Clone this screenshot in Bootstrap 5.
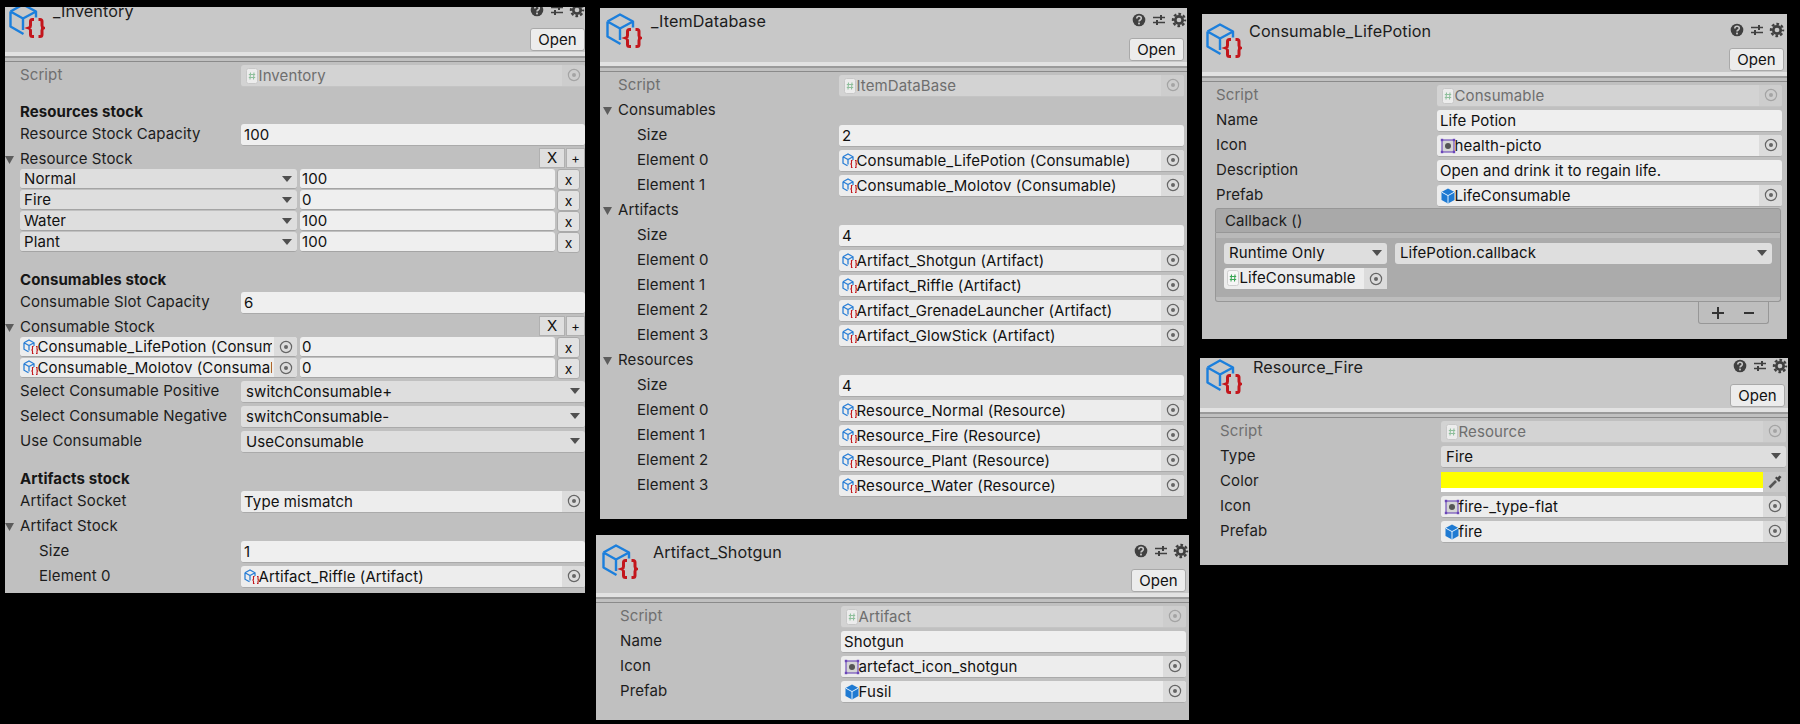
<!DOCTYPE html>
<html lang="en">
<head>
<meta charset="utf-8">
<title>Unity inspectors</title>
<link rel="stylesheet" href="https://cdn.jsdelivr.net/npm/bootstrap@5.3.0/dist/css/bootstrap.min.css">
<style>
html,body{height:100%;}
body{background:#000;font-family:"Inter","Liberation Sans",sans-serif;font-size:15px;letter-spacing:.1px;color:#101010;overflow:hidden;}
.desk{position:relative;width:1800px;height:724px;}
.insp{position:absolute;overflow:hidden;background:#c0c0c0;}
.w1{left:5px;top:7px;width:580px;height:586px;--lx:15px;--fx:236px;--fr:0px;--clip:-13px;}
.w2{left:600px;top:8px;width:587px;height:511px;--lx:18px;--fx:239px;--fr:3px;--clip:-4px;}
.w3{left:596px;top:535px;width:593px;height:185px;--lx:24px;--fx:245px;--fr:3px;--clip:0px;}
.w4{left:1202px;top:14px;width:585px;height:325px;--lx:14px;--fx:235px;--fr:5px;--clip:0px;}
.w5{left:1200px;top:358px;width:588px;height:207px;--lx:20px;--fx:241px;--fr:2px;--clip:-8px;}
.ihead{height:58px;margin-top:var(--clip);background:#c8c8c8;position:relative;}
.ilogo{position:absolute;left:4px;top:9px;width:36px;height:35px;}
.w2 .ilogo,.w3 .ilogo,.w5 .ilogo{left:6px;}
.ititle{position:absolute;left:47px;top:7px;line-height:20px;font-size:16.2px;color:#1c1c1c;}
.w1 .ititle{left:48px;}.w2 .ititle{left:51px;}.w3 .ititle{left:57px;}.w5 .ititle{left:53px;}
.itools{position:absolute;right:0;top:8px;gap:4px;}
.w4 .itools{right:2px;}
.ico-tool{width:16px;height:16px;display:block;}
.btn.open-btn{position:absolute;right:3px;bottom:1px;width:55px;height:23px;padding:0;font-size:15px;line-height:21px;color:#111;background:#ececec;border:1px solid #a9a9a9;border-radius:3px;--bs-btn-hover-bg:#ececec;}
.w1 .btn.open-btn{right:0;}
.isep{height:11px;background:linear-gradient(#e2e2e2 0 4px,#9a9a9a 4px 6px,#c0c0c0 6px 9px,#8a8a8a 9px 10px,#c0c0c0 10px);}
.rw{height:25px;padding-left:var(--lx);padding-right:var(--fr);position:relative;}
.lb{width:calc(var(--fx) - var(--lx));flex:none;white-space:nowrap;color:#1c1c1c;}
.lb.sub{padding-left:19px;}
.lb.dim{color:#6f6f6f;}
.fold{position:absolute;left:calc(var(--lx) - 15px);top:9px;width:9px;height:8px;}
.fld{flex:1 1 auto;min-width:0;height:22px;border-radius:3px;background:#efefef;border-bottom:1px solid #aaa;padding-left:3px;white-space:nowrap;overflow:hidden;position:relative;line-height:21px;color:#111;}
.fld.obj{background:#ededed;padding-right:24px;}
.fld.dis{background:#d3d3d3;color:#6e6e6e;border-bottom-color:#c4c4c4;}
.fld.drop{background:#dedede;padding-left:5px;padding-right:20px;}
.fld.swatch{height:20px;background:linear-gradient(#ff0 0 16px,#fff 16px);border:0;border-radius:0;padding:0;}
.pick{position:absolute;right:0;top:0;bottom:0;width:23px;background:#dcdcdc;display:flex;align-items:center;justify-content:center;}
.dis .pick{background:#cdcdcd;}
.ipick{width:14px;height:14px;}
.ismall{width:16px;height:16px;flex:none;margin-right:-1.5px;vertical-align:-3px;}
.caret{position:absolute;right:5px;top:7px;width:10px;height:6px;}
.drops{width:23px;flex:none;height:20px;background:#c9c9c9;display:flex;align-items:center;justify-content:center;}
.bold{font-weight:700;height:21px;line-height:21px;padding-left:var(--lx);font-size:15px;color:#161616;}
.m-a{margin-top:13px;}.m-b{margin-top:16px;}.m-c{margin-top:14px;}
.listrow{height:21px;padding-left:15px;position:relative;gap:3px;}
.lst{margin-top:-3px;}
.lcell{height:20px;border-radius:3px;border-bottom:1px solid #a4a4a4;position:relative;white-space:nowrap;overflow:hidden;line-height:19px;color:#111;}
.lleft{width:277px;flex:none;background:#dedede;padding-left:4px;}
.lleft.oo{background:#ededed;padding-left:3px;}
.lright{width:255px;flex:none;background:#efefef;padding-left:2px;}
.lcut{display:block;overflow:hidden;width:249px;height:19px;}
.btn.xbtn{width:23px;height:21px;padding:0;margin-left:-1px;font-size:14px;line-height:17px;color:#111;border:1px solid #aaa;background:#e2e2e2;border-radius:3px;--bs-btn-hover-bg:#e2e2e2;}
.listhead{position:absolute;right:0;top:1px;}
.btn.lx{width:26px;height:20px;padding:0;font-size:15px;line-height:18px;color:#111;background:#dfdfdf;border:1px solid #b0b0b0;border-radius:0;margin-right:1px;}
.btn.lp{width:19px;height:20px;padding:0;font-size:13px;line-height:18px;color:#111;background:#dfdfdf;border:1px solid #b0b0b0;border-radius:0;}
.evt{margin:0 6px 0 13px;position:relative;}
.evt-h{height:25px;background:#a9a9a9;border:1px solid #979797;border-radius:3px 3px 0 0;padding-left:9px;line-height:23px;color:#1c1c1c;}
.evt-b{height:69px;background:linear-gradient(#b9b9b9 0 5px,#ababab 5px 64px,#bdbdbd 64px);border:1px solid #979797;border-top:0;border-radius:0 0 3px 3px;padding:10px 8px 0;}
.evt-row{gap:8px;}
.evt-row>.fld{height:21px;line-height:20px;border-bottom:0;}
.w-a{flex:0 0 163px;}
.evt-obj{width:163px;height:21px;margin-top:4px;background:#ededed;border-radius:3px;padding-left:1px;line-height:20px;white-space:nowrap;position:relative;color:#111;}
.pm{position:absolute;right:18px;top:288px;width:71px;height:22px;border:1px solid #979797;border-top:0;border-radius:0 0 3px 3px;background:#bebebe;}
.pmi{width:12px;height:12px;}
.pm-gap{gap:19px;}
</style>
</head>
<body>
<svg width="0" height="0" class="position-absolute">
<defs>
<symbol id="logo" viewBox="0 0 36 35">
<path d="M1.500 8.500 14 1.500l13 7v6M1.500 8.500V23.500L14.500 31M1.500 8.500 14 15.500l13-7M14 15.500V27" fill="none" stroke="#1c7fdc" stroke-width="2.400" stroke-linejoin="round"/>
<path d="M25 16.500h-1.500q-2 0-2 2v4q0 2-1.500 2.500 1.500.5 1.500 2.500v4q0 2 2 2H25M29.500 16.500H31q2 0 2 2v4q0 2 1.500 2.500-1.500.5-1.500 2.500v4q0 2-2 2h-1.500" fill="none" stroke="#c3161c" stroke-width="3"/>
</symbol>
<symbol id="mini" viewBox="0 0 16 16">
<path d="M1 3.800 6 1l5 2.800V7M1 3.800v6.400l4.500 2.600M1 3.800l5 2.800 5-2.800M6 6.600v5" fill="none" stroke="#2a7fd6" stroke-width="1.300"/>
<path d="M10.500 7.500h-1v2.800l-.7.700.7.700v2.800h1M13 7.500h1v2.800l.7.700-.7.700v2.800h-1" fill="none" stroke="#c3161c" stroke-width="1.100"/>
</symbol>
<symbol id="hash" viewBox="0 0 16 16">
<rect x="2.500" y=".5" width="11" height="15" rx="2" fill="#f6f6f6" stroke="#cfcfcf"/>
<path d="M6.500 4.500 6 11.500M10 4.500l-.5 7M4.800 6.500h6.400M4.800 9.500h6.400" stroke="#3aa655" stroke-width="1.100" fill="none"/>
</symbol>
<symbol id="hashd" viewBox="0 0 16 16">
<rect x="2.500" y=".5" width="11" height="15" rx="2" fill="#ececec" stroke="#c8c8c8"/>
<path d="M6.500 4.500 6 11.500M10 4.500l-.5 7M4.800 6.500h6.400M4.800 9.500h6.400" stroke="#8fbf9c" stroke-width="1.100" fill="none"/>
</symbol>
<symbol id="sprite" viewBox="0 0 16 16">
<rect x="2" y="2" width="12" height="12" fill="#d6d6d6" stroke="#6a45b8" stroke-width="1.100"/>
<rect x=".8" y=".8" width="2.400" height="2.400" fill="#6a45b8"/><rect x="12.800" y=".8" width="2.400" height="2.400" fill="#6a45b8"/>
<rect x=".8" y="12.800" width="2.400" height="2.400" fill="#6a45b8"/><rect x="12.800" y="12.800" width="2.400" height="2.400" fill="#6a45b8"/>
<circle cx="8" cy="8" r="3" fill="#555"/>
</symbol>
<symbol id="prefab" viewBox="0 0 16 16">
<path d="M8 .5 14.500 4v8L8 15.500 1.500 12V4z" fill="#1f7ad2"/>
<path d="M1.800 4.200 8 7.600l6.200-3.400M8 7.600v7.600" stroke="#dff0ff" stroke-width="1" fill="none"/>
</symbol>
<symbol id="target" viewBox="0 0 14 14">
<circle cx="7" cy="7" r="5.600" fill="none" stroke="#666" stroke-width="1.200"/><circle cx="7" cy="7" r="2" fill="#666"/>
</symbol>
<symbol id="targetd" viewBox="0 0 14 14">
<circle cx="7" cy="7" r="5.600" fill="none" stroke="#a4a4a4" stroke-width="1.200"/><circle cx="7" cy="7" r="2" fill="#a4a4a4"/>
</symbol>
<symbol id="tri" viewBox="0 0 9 8"><path d="M0 0h9L4.500 8z" fill="#5c5c5c"/></symbol>
<symbol id="car" viewBox="0 0 10 6"><path d="M0 0h10L5 6z" fill="#4f4f4f"/></symbol>
<symbol id="help" viewBox="0 0 16 16">
<circle cx="8" cy="8" r="6.300" fill="#404040"/>
<path d="M5.800 6.400C5.800 5 6.800 4.300 8 4.300s2.300.8 2.300 2c0 1.700-2.300 1.700-2.300 3.300" fill="none" stroke="#c8c8c8" stroke-width="1.600"/>
<rect x="7.100" y="10.600" width="1.800" height="1.800" fill="#c8c8c8"/>
</symbol>
<symbol id="sliders" viewBox="0 0 16 16">
<path d="M2 5.500h12M2 10.500h12" stroke="#404040" stroke-width="1.500"/>
<path d="M10 3v5M6 8v5" stroke="#404040" stroke-width="2"/>
</symbol>
<symbol id="gear" viewBox="0 0 16 16">
<circle cx="8" cy="8" r="3.700" fill="none" stroke="#404040" stroke-width="2.700"/>
<circle cx="8" cy="8" r="6" fill="none" stroke="#404040" stroke-width="2.400" stroke-dasharray="2.650 2.060" stroke-dashoffset="1.320"/>
</symbol>
<symbol id="dropper" viewBox="0 0 16 16">
<path d="M2.500 13.500 9 7" stroke="#555" stroke-width="2.600"/>
<path d="M8 4l4 4 1.500-1.500-1-1 2-2.500-2-1.500-2 2-1-1z" fill="#444"/>
</symbol>
</defs>
</svg>

<main class="desk">

<section class="insp w1">
<div class="ihead">
<svg class="ilogo"><use href="#logo"/></svg>
<div class="ititle">_Inventory</div>
<div class="itools d-flex"><svg class="ico-tool"><use href="#help"/></svg><svg class="ico-tool"><use href="#sliders"/></svg><svg class="ico-tool"><use href="#gear"/></svg></div>
<button class="btn open-btn">Open</button>
</div>
<div class="isep"></div>
<div>
<div class="rw d-flex align-items-center"><div class="lb dim">Script</div><div class="fld obj dis"><svg class="ismall"><use href="#hashd"/></svg>Inventory<span class="pick"><svg class="ipick"><use href="#targetd"/></svg></span></div></div>
<div class="bold m-a">Resources stock</div>
<div class="rw d-flex align-items-center"><div class="lb">Resource Stock Capacity</div><div class="fld">100</div></div>
<div class="rw d-flex align-items-center"><svg class="fold"><use href="#tri"/></svg><div class="lb">Resource Stock</div><div class="listhead d-flex"><button class="btn lx">X</button><button class="btn lp">+</button></div></div>
<div class="lst">
<div class="listrow d-flex"><div class="lcell lleft">Normal<svg class="caret"><use href="#car"/></svg></div><div class="lcell lright">100</div><button class="btn xbtn">x</button></div>
<div class="listrow d-flex"><div class="lcell lleft">Fire<svg class="caret"><use href="#car"/></svg></div><div class="lcell lright">0</div><button class="btn xbtn">x</button></div>
<div class="listrow d-flex"><div class="lcell lleft">Water<svg class="caret"><use href="#car"/></svg></div><div class="lcell lright">100</div><button class="btn xbtn">x</button></div>
<div class="listrow d-flex"><div class="lcell lleft">Plant<svg class="caret"><use href="#car"/></svg></div><div class="lcell lright">100</div><button class="btn xbtn">x</button></div>
</div>
<div class="bold m-b">Consumables stock</div>
<div class="rw d-flex align-items-center"><div class="lb">Consumable Slot Capacity</div><div class="fld">6</div></div>
<div class="rw d-flex align-items-center"><svg class="fold"><use href="#tri"/></svg><div class="lb">Consumable Stock</div><div class="listhead d-flex"><button class="btn lx">X</button><button class="btn lp">+</button></div></div>
<div class="lst">
<div class="listrow d-flex"><div class="lcell lleft oo"><span class="lcut"><svg class="ismall"><use href="#mini"/></svg>Consumable_LifePotion (Consumable)</span><span class="pick"><svg class="ipick"><use href="#target"/></svg></span></div><div class="lcell lright">0</div><button class="btn xbtn">x</button></div>
<div class="listrow d-flex"><div class="lcell lleft oo"><span class="lcut"><svg class="ismall"><use href="#mini"/></svg>Consumable_Molotov (Consumable)</span><span class="pick"><svg class="ipick"><use href="#target"/></svg></span></div><div class="lcell lright">0</div><button class="btn xbtn">x</button></div>
</div>
<div class="rw d-flex align-items-center"><div class="lb">Select Consumable Positive</div><div class="fld drop">switchConsumable+<svg class="caret"><use href="#car"/></svg></div></div>
<div class="rw d-flex align-items-center"><div class="lb">Select Consumable Negative</div><div class="fld drop">switchConsumable-<svg class="caret"><use href="#car"/></svg></div></div>
<div class="rw d-flex align-items-center"><div class="lb">Use Consumable</div><div class="fld drop">UseConsumable<svg class="caret"><use href="#car"/></svg></div></div>
<div class="bold m-c">Artifacts stock</div>
<div class="rw d-flex align-items-center"><div class="lb">Artifact Socket</div><div class="fld obj">Type mismatch<span class="pick"><svg class="ipick"><use href="#target"/></svg></span></div></div>
<div class="rw d-flex align-items-center"><svg class="fold"><use href="#tri"/></svg><div class="lb">Artifact Stock</div></div>
<div class="rw d-flex align-items-center"><div class="lb sub">Size</div><div class="fld">1</div></div>
<div class="rw d-flex align-items-center"><div class="lb sub">Element 0</div><div class="fld obj"><svg class="ismall"><use href="#mini"/></svg>Artifact_Riffle (Artifact)<span class="pick"><svg class="ipick"><use href="#target"/></svg></span></div></div>
</div>
</section>

<section class="insp w2">
<div class="ihead">
<svg class="ilogo"><use href="#logo"/></svg>
<div class="ititle">_ItemDatabase</div>
<div class="itools d-flex"><svg class="ico-tool"><use href="#help"/></svg><svg class="ico-tool"><use href="#sliders"/></svg><svg class="ico-tool"><use href="#gear"/></svg></div>
<button class="btn open-btn">Open</button>
</div>
<div class="isep"></div>
<div>
<div class="rw d-flex align-items-center"><div class="lb dim">Script</div><div class="fld obj dis"><svg class="ismall"><use href="#hashd"/></svg>ItemDataBase<span class="pick"><svg class="ipick"><use href="#targetd"/></svg></span></div></div>
<div class="rw d-flex align-items-center"><svg class="fold"><use href="#tri"/></svg><div class="lb">Consumables</div></div>
<div class="rw d-flex align-items-center"><div class="lb sub">Size</div><div class="fld">2</div></div>
<div class="rw d-flex align-items-center"><div class="lb sub">Element 0</div><div class="fld obj"><svg class="ismall"><use href="#mini"/></svg>Consumable_LifePotion (Consumable)<span class="pick"><svg class="ipick"><use href="#target"/></svg></span></div></div>
<div class="rw d-flex align-items-center"><div class="lb sub">Element 1</div><div class="fld obj"><svg class="ismall"><use href="#mini"/></svg>Consumable_Molotov (Consumable)<span class="pick"><svg class="ipick"><use href="#target"/></svg></span></div></div>
<div class="rw d-flex align-items-center"><svg class="fold"><use href="#tri"/></svg><div class="lb">Artifacts</div></div>
<div class="rw d-flex align-items-center"><div class="lb sub">Size</div><div class="fld">4</div></div>
<div class="rw d-flex align-items-center"><div class="lb sub">Element 0</div><div class="fld obj"><svg class="ismall"><use href="#mini"/></svg>Artifact_Shotgun (Artifact)<span class="pick"><svg class="ipick"><use href="#target"/></svg></span></div></div>
<div class="rw d-flex align-items-center"><div class="lb sub">Element 1</div><div class="fld obj"><svg class="ismall"><use href="#mini"/></svg>Artifact_Riffle (Artifact)<span class="pick"><svg class="ipick"><use href="#target"/></svg></span></div></div>
<div class="rw d-flex align-items-center"><div class="lb sub">Element 2</div><div class="fld obj"><svg class="ismall"><use href="#mini"/></svg>Artifact_GrenadeLauncher (Artifact)<span class="pick"><svg class="ipick"><use href="#target"/></svg></span></div></div>
<div class="rw d-flex align-items-center"><div class="lb sub">Element 3</div><div class="fld obj"><svg class="ismall"><use href="#mini"/></svg>Artifact_GlowStick (Artifact)<span class="pick"><svg class="ipick"><use href="#target"/></svg></span></div></div>
<div class="rw d-flex align-items-center"><svg class="fold"><use href="#tri"/></svg><div class="lb">Resources</div></div>
<div class="rw d-flex align-items-center"><div class="lb sub">Size</div><div class="fld">4</div></div>
<div class="rw d-flex align-items-center"><div class="lb sub">Element 0</div><div class="fld obj"><svg class="ismall"><use href="#mini"/></svg>Resource_Normal (Resource)<span class="pick"><svg class="ipick"><use href="#target"/></svg></span></div></div>
<div class="rw d-flex align-items-center"><div class="lb sub">Element 1</div><div class="fld obj"><svg class="ismall"><use href="#mini"/></svg>Resource_Fire (Resource)<span class="pick"><svg class="ipick"><use href="#target"/></svg></span></div></div>
<div class="rw d-flex align-items-center"><div class="lb sub">Element 2</div><div class="fld obj"><svg class="ismall"><use href="#mini"/></svg>Resource_Plant (Resource)<span class="pick"><svg class="ipick"><use href="#target"/></svg></span></div></div>
<div class="rw d-flex align-items-center"><div class="lb sub">Element 3</div><div class="fld obj"><svg class="ismall"><use href="#mini"/></svg>Resource_Water (Resource)<span class="pick"><svg class="ipick"><use href="#target"/></svg></span></div></div>
</div>
</section>

<section class="insp w3">
<div class="ihead">
<svg class="ilogo"><use href="#logo"/></svg>
<div class="ititle">Artifact_Shotgun</div>
<div class="itools d-flex"><svg class="ico-tool"><use href="#help"/></svg><svg class="ico-tool"><use href="#sliders"/></svg><svg class="ico-tool"><use href="#gear"/></svg></div>
<button class="btn open-btn">Open</button>
</div>
<div class="isep"></div>
<div>
<div class="rw d-flex align-items-center"><div class="lb dim">Script</div><div class="fld obj dis"><svg class="ismall"><use href="#hashd"/></svg>Artifact<span class="pick"><svg class="ipick"><use href="#targetd"/></svg></span></div></div>
<div class="rw d-flex align-items-center"><div class="lb">Name</div><div class="fld">Shotgun</div></div>
<div class="rw d-flex align-items-center"><div class="lb">Icon</div><div class="fld obj"><svg class="ismall"><use href="#sprite"/></svg>artefact_icon_shotgun<span class="pick"><svg class="ipick"><use href="#target"/></svg></span></div></div>
<div class="rw d-flex align-items-center"><div class="lb">Prefab</div><div class="fld obj"><svg class="ismall"><use href="#prefab"/></svg>Fusil<span class="pick"><svg class="ipick"><use href="#target"/></svg></span></div></div>
</div>
</section>

<section class="insp w4">
<div class="ihead">
<svg class="ilogo"><use href="#logo"/></svg>
<div class="ititle">Consumable_LifePotion</div>
<div class="itools d-flex"><svg class="ico-tool"><use href="#help"/></svg><svg class="ico-tool"><use href="#sliders"/></svg><svg class="ico-tool"><use href="#gear"/></svg></div>
<button class="btn open-btn">Open</button>
</div>
<div class="isep"></div>
<div>
<div class="rw d-flex align-items-center"><div class="lb dim">Script</div><div class="fld obj dis"><svg class="ismall"><use href="#hashd"/></svg>Consumable<span class="pick"><svg class="ipick"><use href="#targetd"/></svg></span></div></div>
<div class="rw d-flex align-items-center"><div class="lb">Name</div><div class="fld">Life Potion</div></div>
<div class="rw d-flex align-items-center"><div class="lb">Icon</div><div class="fld obj"><svg class="ismall"><use href="#sprite"/></svg>health-picto<span class="pick"><svg class="ipick"><use href="#target"/></svg></span></div></div>
<div class="rw d-flex align-items-center"><div class="lb">Description</div><div class="fld">Open and drink it to regain life.</div></div>
<div class="rw d-flex align-items-center"><div class="lb">Prefab</div><div class="fld obj"><svg class="ismall"><use href="#prefab"/></svg>LifeConsumable<span class="pick"><svg class="ipick"><use href="#target"/></svg></span></div></div>
<div class="evt">
<div class="evt-h">Callback ()</div>
<div class="evt-b">
<div class="evt-row d-flex"><div class="fld drop w-a">Runtime Only<svg class="caret"><use href="#car"/></svg></div><div class="fld drop">LifePotion.callback<svg class="caret"><use href="#car"/></svg></div></div>
<div class="evt-obj"><svg class="ismall"><use href="#hash"/></svg>LifeConsumable<span class="pick"><svg class="ipick"><use href="#target"/></svg></span></div>
</div>
</div>
</div>
<div class="pm d-flex align-items-center justify-content-center pm-gap">
<svg class="pmi" viewBox="0 0 12 12"><path d="M6 0v12M0 6h12" stroke="#333" stroke-width="2"/></svg>
<svg class="pmi" viewBox="0 0 12 12"><path d="M1 6h10" stroke="#333" stroke-width="2"/></svg>
</div>
</section>

<section class="insp w5">
<div class="ihead">
<svg class="ilogo"><use href="#logo"/></svg>
<div class="ititle">Resource_Fire</div>
<div class="itools d-flex"><svg class="ico-tool"><use href="#help"/></svg><svg class="ico-tool"><use href="#sliders"/></svg><svg class="ico-tool"><use href="#gear"/></svg></div>
<button class="btn open-btn">Open</button>
</div>
<div class="isep"></div>
<div>
<div class="rw d-flex align-items-center"><div class="lb dim">Script</div><div class="fld obj dis"><svg class="ismall"><use href="#hashd"/></svg>Resource<span class="pick"><svg class="ipick"><use href="#targetd"/></svg></span></div></div>
<div class="rw d-flex align-items-center"><div class="lb">Type</div><div class="fld drop">Fire<svg class="caret"><use href="#car"/></svg></div></div>
<div class="rw d-flex align-items-center"><div class="lb">Color</div><div class="fld swatch"></div><div class="drops"><svg class="ico-tool"><use href="#dropper"/></svg></div></div>
<div class="rw d-flex align-items-center"><div class="lb">Icon</div><div class="fld obj"><svg class="ismall"><use href="#sprite"/></svg>fire-_type-flat<span class="pick"><svg class="ipick"><use href="#target"/></svg></span></div></div>
<div class="rw d-flex align-items-center"><div class="lb">Prefab</div><div class="fld obj"><svg class="ismall"><use href="#prefab"/></svg>fire<span class="pick"><svg class="ipick"><use href="#target"/></svg></span></div></div>
</div>
</section>

</main>
<script src="https://cdn.jsdelivr.net/npm/bootstrap@5.3.0/dist/js/bootstrap.bundle.min.js"></script>
</body>
</html>
